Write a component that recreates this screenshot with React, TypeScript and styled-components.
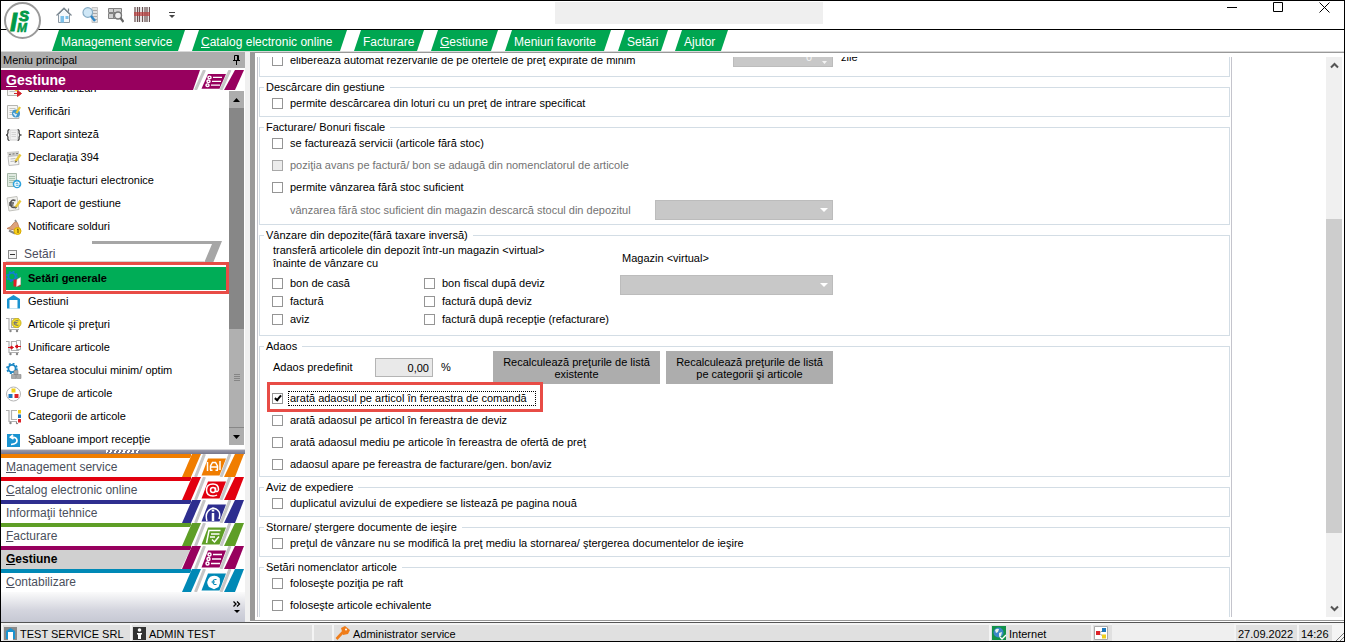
import React from 'react';
import styled, { createGlobalStyle, css } from 'styled-components';

const GlobalStyle = createGlobalStyle`
  *, *::before, *::after { box-sizing: border-box; }
  body { margin: 0; background: #fff; }
  body, button, input, select {
    font-family: "Liberation Sans", Arial, sans-serif;
    font-size: 11px;
    color: #000;
  }
  button { border: 0; padding: 0; background: none; }
  a { color: inherit; text-decoration: none; }
`;

const GREEN = '#00a651';
const PURPLE = '#97005e';
const RED = '#e84c46';

/* ---------- window frame ---------- */

const Window = styled.div`
  position: relative;
  display: flex;
  flex-direction: column;
  height: 100vh;
  border: 1px solid #000;
  background: #fff;
  line-height: 13px;
  overflow: hidden;
`;

const TitleBar = styled.header`
  display: grid;
  grid-template-columns: 554fr 268px 521fr;
  flex: none;
  height: 29px;
  border-bottom: 1px solid #000;
`;

const Logo = styled.svg`
  position: absolute;
  left: 2px;
  top: 0;
  width: 40px;
  height: 40px;
`;

const QuickBar = styled.div`
  display: flex;
  align-items: center;
  gap: 10px;
  padding-left: 55px;
  button, svg { display: block; }
`;

const TitleField = styled.div`
  height: 22px;
  margin-top: 1px;
  background: #efefef;
`;

const WindowButtons = styled.div`
  display: flex;
  justify-content: flex-end;
  gap: 10px;
  padding-right: 2px;
  button { width: 36px; height: 12px; }
  svg { display: block; margin: 0 auto; }
`;

const MenuBar = styled.nav`
  display: flex;
  flex: none;
  gap: 7px;
  height: 22px;
  padding-left: 51px;
  border-bottom: 1px solid #d9d9d9;
`;

const MenuTab = styled.a<{ $width: number }>`
  width: ${p => p.$width}px;
  padding-left: 9px;
  background: ${GREEN};
  color: #fff;
  font-size: 12px;
  line-height: 24px;
  white-space: nowrap;
  clip-path: polygon(7px 0, 100% 0, calc(100% - 7px) 100%, 0 100%);
`;

const Body = styled.div`
  display: flex;
  flex: 1;
  min-height: 0;
`;

/* ---------- sidebar ---------- */

const Sidebar = styled.aside`
  display: flex;
  flex-direction: column;
  flex: none;
  width: 249px;
  border-right: 5px solid #f0f0f0;
  background: #fff;
`;

const SidebarTitle = styled.div`
  display: flex;
  align-items: center;
  justify-content: space-between;
  flex: none;
  height: 16px;
  padding: 0 4px 0 2px;
  background: #adadad;
  svg { display: block; }
`;

const SectionTitle = styled.h2`
  display: flex;
  justify-content: space-between;
  flex: none;
  height: 20px;
  margin: 2px 0 0;
  padding-left: 5px;
  background: linear-gradient(90deg, ${PURPLE} 190px, #fff 190px);
  color: #fff;
  font-size: 14px;
  line-height: 20px;
  svg { display: block; }
`;

const ListArea = styled.div`
  display: flex;
  flex: 1;
  min-height: 0;
`;

const ListClip = styled.div`
  display: flex;
  flex: 1;
  flex-direction: column;
  justify-content: flex-end;
  overflow: hidden;
`;

const List = styled.div`
  flex: none;
  margin-bottom: -2px;
`;

const Item = styled.a<{ $active?: boolean }>`
  position: relative;
  display: flex;
  align-items: center;
  gap: 6px;
  height: 23px;
  margin-left: 5px;
  white-space: nowrap;
  svg { display: block; flex: none; }
  ${p => p.$active && css`
    background: #00ad57;
    font-weight: bold;
    &::after {
      content: "";
      position: absolute;
      inset: -5px 0 -4px -3px;
      border: 3px solid ${RED};
    }
  `}
`;

const GroupHeader = styled.div`
  position: relative;
  display: flex;
  align-items: center;
  gap: 7px;
  height: 29px;
  padding: 3px 0 0 7px;
  color: #4c4c5c;
  font-size: 12px;
`;

const Ribbon = styled.svg`
  position: absolute;
  right: 7px;
  top: 3px;
`;

const Collapse = styled.button`
  width: 9px;
  height: 9px;
  border: 1px solid #8c8c8c;
  background: linear-gradient(#333, #333) center / 5px 1px no-repeat #f4f4f4;
`;

const SideScroll = styled.div`
  display: flex;
  flex-direction: column;
  flex: none;
  width: 15px;
  margin: 1px 1px 4px 0;
  background: #878787;
  button {
    display: grid;
    place-items: center;
    flex: none;
    height: 17px;
    background: #adadad;
  }
`;

const SideThumb = styled.div`
  display: grid;
  place-items: center;
  flex: 98 1 0;
  margin-bottom: 1px;
  background: #b0b0b0;
`;

const Spacer = styled.div<{ $grow: number }>`
  flex: ${p => p.$grow} 1 0;
`;

const Splitter = styled.div`
  display: flex;
  justify-content: center;
  flex: none;
  height: 5px;
  border-top: 1px solid #d4d4d8;
  background: linear-gradient(#9a9aac, #77778c);
  &::after {
    content: "";
    width: 34px;
    height: 3px;
    background: repeating-linear-gradient(115deg, #fff 0 2px, #77778c 2px 4px);
  }
`;

const NavButton = styled.a<{ $color: string; $active?: boolean }>`
  display: flex;
  justify-content: space-between;
  flex: none;
  height: 23px;
  padding-left: 5px;
  background: linear-gradient(
    ${p => p.$color} 4px,
    ${p => (p.$active ? '#d0d0d0' : '#fff')} 4px
  ) 0 0 / 190px 100% no-repeat;
  color: ${p => (p.$active ? '#000' : '#4a4f5c')};
  font-size: 12px;
  font-weight: ${p => (p.$active ? 'bold' : 'normal')};
  line-height: 26px;
  svg { display: block; }
`;

const NavFooter = styled.div`
  display: flex;
  justify-content: flex-end;
  align-items: flex-end;
  flex: none;
  height: 30px;
  padding: 0 4px 8px 0;
  background: linear-gradient(#fbfbfb, #d4d5de 60%, #c6c8d3);
  svg { display: block; }
`;

/* ---------- settings form ---------- */

const Main = styled.main`
  display: flex;
  flex: 1;
  min-width: 0;
  margin-bottom: 1px;
  padding: 4px 2px 3px;
  border: solid #999;
  border-width: 1px 0 1px 5px;
`;

const FormClip = styled.div`
  display: flex;
  flex: 1;
  flex-direction: column;
  justify-content: flex-end;
  min-width: 0;
  margin-right: 94px;
  padding: 0 1px;
  border: solid #c4c4cc;
  border-width: 0 1px;
  overflow: hidden;
`;

const Group = styled.fieldset<{ $foot?: number; $open?: boolean }>`
  flex: none;
  min-width: 0;
  margin: 4px 0 0;
  padding: 0 4px ${p => p.$foot ?? 4}px;
  border: 1px solid #d3dde5;
  ${p => p.$open && css`border-bottom: 0;`}
`;

const Legend = styled.legend`
  padding: 0 5px 0 2px;
  line-height: 13px;
`;

const Rows = styled.div`
  display: flex;
  flex-direction: column;
  align-items: flex-start;
  gap: 4px;
  padding-left: 8px;
`;

const CheckLabel = styled.label<{ $muted?: boolean; $marked?: boolean }>`
  position: relative;
  display: flex;
  align-items: center;
  gap: 7px;
  height: 18px;
  color: ${p => (p.$muted ? '#737373' : '#000')};
  white-space: nowrap;
  ${p => p.$marked && css`
    gap: 5px;
    span { padding: 0 8px 0 1px; border: 1px dotted #000; }
    &::after {
      content: "";
      position: absolute;
      inset: -7px -7px -5px -5px;
      border: 3px solid ${RED};
    }
  `}
`;

const Box = styled.input`
  appearance: none;
  display: grid;
  place-items: center;
  flex: none;
  width: 11px;
  height: 11px;
  margin: 0;
  border: 1px solid #959595;
  background: #fff;
  &:disabled { border-color: #a8a8a8; background: #ececec; }
  &:checked::before {
    content: "";
    width: 4px;
    height: 7px;
    margin-top: -2px;
    border: solid #000;
    border-width: 0 2px 2px 0;
    transform: rotate(40deg);
  }
`;

const ReserveLine = styled.div`
  display: grid;
  grid-template-columns: 461px 100px auto;
  align-items: start;
  height: 22px;
  ${CheckLabel} { align-self: end; }
`;

const Unit = styled.span`
  padding-left: 8px;
  line-height: 20px;
`;

const SpinBox = styled.div`
  position: relative;
  input {
    display: block;
    width: 100%;
    height: 20px;
    padding: 0 20px 0 0;
    border: 1px solid #bcbcbc;
    background: #c8c8c8;
    color: #f4f4f4;
    text-align: right;
  }
  svg { position: absolute; right: 4px; top: 4px; }
`;

const StockLine = styled.div`
  display: grid;
  grid-template-columns: 365px 178px;
  align-items: center;
  padding-left: 18px;
  color: #737373;
`;

const SelectWrap = styled.div`
  position: relative;
  select {
    appearance: none;
    display: block;
    width: 100%;
    height: 20px;
    border: 1px solid #bcbcbc;
    border-radius: 0;
    background: #c8c8c8;
    opacity: 1;
  }
  &::after {
    content: "";
    position: absolute;
    right: 5px;
    top: 8px;
    border: 4px solid transparent;
    border-top-color: #fff;
    border-bottom: 0;
  }
`;

const TransferGrid = styled.div`
  display: grid;
  grid-template-columns: 348px 213px;
  padding: 2px 0 3px 8px;
`;

const Note = styled.p`
  margin: 0 0 4px;
  padding-left: 1px;
`;

const CheckColumns = styled.div`
  display: grid;
  grid-template-columns: 152px auto;
`;

const Store = styled.div`
  display: flex;
  flex-direction: column;
  gap: 10px;
  padding-top: 8px;
  label { padding-left: 2px; }
`;

const MarkupLine = styled.div`
  display: flex;
  align-items: center;
  margin: -2px 0 1px;
  label { width: 103px; padding-left: 1px; }
`;

const Percent = styled.input`
  width: 58px;
  height: 19px;
  padding: 0 3px;
  border: 1px solid #b4b4b4;
  background: #e9e9e9;
  text-align: right;
`;

const PercentSign = styled.span`
  width: 60px;
  padding-left: 8px;
`;

const ActionButton = styled.button`
  width: 167px;
  height: 33px;
  margin-right: 6px;
  background: #adadad;
  line-height: 12px;
  text-align: center;
`;

const PageScroll = styled.div`
  display: flex;
  flex-direction: column;
  flex: none;
  width: 16px;
  background: #f0f0f0;
  button {
    display: grid;
    place-items: center;
    flex: none;
    height: 17px;
  }
`;

const PageThumb = styled.div`
  flex: 314 1 0;
  background: #cdcdcd;
`;

/* ---------- status bar ---------- */

const StatusBar = styled.footer`
  display: flex;
  flex: none;
  gap: 2px;
  height: 19px;
  padding: 2px 0 0 2px;
  border-top: 1px solid #555;
  background: #f4f4f4;
`;

const Cell = styled.div<{ $width?: number }>`
  display: flex;
  align-items: center;
  gap: 3px;
  flex: ${p => (p.$width ? `0 0 ${p.$width}px` : '1 1 0')};
  padding: 2px 0 0 1px;
  background: #e0e0e0;
  white-space: nowrap;
  overflow: hidden;
  svg { flex: none; margin-top: -2px; }
`;

const DateCell = styled(Cell)`
  padding-left: 2px;
`;

const Blank = styled.div`
  flex: 0 0 122px;
  margin: -2px 0 0 -2px;
  background: #efefef;
`;

/* ---------- icons ---------- */

type IconName =
  | 'journal' | 'verify' | 'braces' | 'decl' | 'einvoice' | 'report' | 'bell'
  | 'settings' | 'depot' | 'cartEuro' | 'merge' | 'stock' | 'group' | 'category' | 'import';

const Sheet = () => (
  <>
    <path d="M1.500 1.500h10l1.500 13h-11.500z" fill="#f6f6f4" stroke="#b5b5b0" />
    <path d="M3.500 4.500h6M3.500 6.500h7M3.500 8.500h6M3.500 10.500h6" stroke="#c4c4c0" />
  </>
);

const Pencil = () => (
  <>
    <path d="M14.500 4.500l-5 7" stroke="#e9c93a" strokeWidth="2.400" />
    <path d="M9.800 10.500l-1.300 2.500 2.500-1.200z" fill="#555" />
  </>
);

const Cart = () => (
  <>
    <path d="M0 1.500h3v11h10M5.500 1.500h7v9h-7z" fill="none" stroke="#b0b0b0" strokeWidth="1.200" />
    <circle cx="4.500" cy="14" r="1.200" fill="#888" />
    <circle cx="11" cy="14" r="1.200" fill="#888" />
  </>
);

const Gear = ({ x, y, color }: { x: number; y: number; color: string }) => (
  <>
    <circle cx={x} cy={y} r="3.600" fill="none" stroke={color} strokeWidth="1.800" />
    <circle cx={x} cy={y} r="5" fill="none" stroke={color} strokeWidth="1.600" strokeDasharray="1.960 1.960" />
  </>
);

const art: Record<IconName, React.ReactNode> = {
  journal: (
    <>
      <Sheet />
      <path d="M8 12.500h6M11.500 9.500l4 3-4 3z" stroke="#d2232a" fill="#d2232a" />
      <path d="M8 7l3 3" stroke="#e9c93a" strokeWidth="2" />
    </>
  ),
  verify: (
    <>
      <Sheet />
      <circle cx="10" cy="9.500" r="4" fill="#3f97cc" />
      <path d="M7.500 9l2 2.500 1-1.500" stroke="#d9eef9" fill="none" strokeWidth="1.400" />
      <path d="M14 3l-3.500 6" stroke="#e9c93a" strokeWidth="2.200" />
    </>
  ),
  braces: (
    <>
      <path d="M3.500 2.500q-2 0-1.500 3 0 2-1.500 2.500 1.500.5 1.500 2.500-.5 3 1.500 3M11.500 2.500q2 0 1.500 3 0 2 1.500 2.500-1.500.5-1.500 2.500.5 3-1.500 3" fill="none" stroke="#333" strokeWidth="1.200" />
      <path d="M4 3h7.500v10H4z" fill="#f0f0f0" stroke="#d4d4d4" />
      <path d="M5.500 5.500h4.500M5.500 7.500h4.500M5.500 9.500h4.500" stroke="#d4d4d4" />
    </>
  ),
  decl: (
    <>
      <path d="M1 2l12-1v4.500l-11 1z" fill="#d0d0cc" />
      <path d="M2 6.500l10-1 1 9-10 1z" fill="#f6f6f4" stroke="#bbb" />
      <path d="M3 4.500l2-.2M6.500 4l2-.2M10 3.700l2-.2" stroke="#777" />
      <path d="M4.500 9l5-.5M4.500 11.500l5-.5" stroke="#bbb" />
      <Pencil />
    </>
  ),
  einvoice: (
    <>
      <path d="M1.500.5h9v13h-9z" fill="#dfe9e0" stroke="#a7b8a9" />
      <path d="M3 3.500h6M3 5.500h6M3 7.500h6M3 9.500h4" stroke="#a9c2ad" />
      <circle cx="11" cy="11" r="4.300" fill="#2ea3dc" />
      <path d="M8.800 11.200h4.400q0-2.200-2.200-2.200t-2.200 2.200 2.200 2.200q1.300 0 1.900-.8" stroke="#fff" fill="none" strokeWidth="1.100" />
    </>
  ),
  report: (
    <>
      <path d="M1 2l10-1.500 2 13-10 1.500z" fill="#f2f2ef" stroke="#c2c2bd" />
      <path d="M9.500 4.500q-5-1.500-5 3.200 0 4.800 5 3.300M3 7h5M3 9h4.500" stroke="#555" strokeWidth="1.600" fill="none" />
      <Pencil />
    </>
  ),
  bell: (
    <>
      <path d="M1 9.500q4-1 6-4.500 2.500-4 4.500-1l2.500 8z" fill="#dda27c" stroke="#c08460" />
      <path d="M3 11.500l6 3" stroke="#888" strokeWidth="2" />
      <path d="M9 1l1.500 2" stroke="#8b8b8b" strokeWidth="1.500" />
      <circle cx="11.500" cy="12" r="3.500" fill="#f7cf1e" stroke="#d8ab00" />
      <path d="M11 10.500l1-.5v4" stroke="#6b5500" fill="none" />
    </>
  ),
  settings: (
    <>
      <Gear x={6} y={5.500} color="#1180cf" />
      <path d="M7.500 8.500h7v7h-7z" fill="#e01f26" />
      <path d="M11 8.500l3.500-2v7l-4 2z" fill="#fff" stroke="#d9d9d9" strokeWidth=".5" />
    </>
  ),
  depot: (
    <>
      <path d="M1 5l6.500-4 6.500 4v9.500h-13z" fill="#1a93d0" />
      <path d="M3.500 6h8v8.500h-8z" fill="#fff" />
    </>
  ),
  cartEuro: (
    <>
      <Cart />
      <circle cx="10.500" cy="6" r="4.500" fill="#f5df2c" stroke="#c9b31c" />
      <path d="M12.500 3.800q-4-1-4 2.200t4 2.200M7.500 5.500h4M7.500 7h3.500" stroke="#777" fill="none" />
    </>
  ),
  merge: (
    <>
      <Cart />
      <path d="M10.500.5h4v9h-4z" fill="#fff" stroke="#b0b0b0" />
      <path d="M2 7.500h4M5 6l2.500 1.500L5 9zM15 6.500h-4M11.500 5L9 6.500 11.500 8z" fill="#d8121c" stroke="#d8121c" />
    </>
  ),
  stock: (
    <>
      <Gear x={6} y={5.500} color="#1a86c4" />
      <path d="M8 7.500h4v4h-4zM5.500 11.500h4.500v4h-4.500zM10.500 11.500h4.500v4h-4.500z" fill="#aaa" stroke="#888" strokeWidth=".6" />
    </>
  ),
  group: (
    <>
      <circle cx="7.500" cy="8" r="7" fill="#fff" stroke="#b4b4b4" />
      <path d="M5.500 2.500h4v4h-4z" fill="#efcf1c" />
      <path d="M2.500 8h4v4h-4z" fill="#1e78bd" />
      <path d="M8.500 8h4v4h-4z" fill="#dd2228" />
    </>
  ),
  category: (
    <>
      <Cart />
      <path d="M11 0h5v14h-5z" fill="#fff" />
      <path d="M12 1h3v3.500h-3z" fill="#efcf1c" />
      <path d="M12 5.500h3v3.500h-3z" fill="#1e78bd" />
      <path d="M12 10h3v3.500h-3z" fill="#dd2228" />
    </>
  ),
  import: (
    <>
      <path d="M1 2h13v13h-13z" fill="#1a93d0" />
      <path d="M5 5q6 0 6 3.500T5 12.500M7 3L4.500 5.200 7.500 7" fill="none" stroke="#fff" strokeWidth="1.700" />
    </>
  ),
};

const Icon = ({ name }: { name: IconName }) => (
  <svg width="16" height="16" viewBox="0 0 16 16" aria-hidden="true">{art[name]}</svg>
);

type BadgeName = 'car' | 'at' | 'info' | 'check' | 'list' | 'globe';

const badgeArt: Record<BadgeName, React.ReactNode> = {
  car: <path d="M26.500 8v9M39 7v9M29.500 16v-4l2-3.500h3l2 3.500v4M29.500 13h7M29 16.200h2.500M34.500 16.200h2.500" />,
  at: (
    <>
      <circle cx="32" cy="13" r="2.500" />
      <path d="M34.500 10.500v3.500q2.500 1.500 3-1.500 0-5.500-5.500-5.500-6.500 0-6.500 6t6.500 6q2.500 0 4-1" />
    </>
  ),
  info: (
    <>
      <path d="M26 21q-3-10 6-13 9 2 6 11" />
      <path d="M32 13v8M32 9.500v2" strokeWidth="2.500" />
    </>
  ),
  check: <path d="M25.500 20L28 7.500h11.500M30 11h8.500M29 14h5M31 16.500l2.500 2.500 4.500-5.500" />,
  list: (
    <>
      <path d="M32 8.500h9M31 13h9M30 17.500h9" />
      <circle cx="28.500" cy="8.500" r="1.500" />
      <circle cx="27.500" cy="13" r="1.500" />
      <circle cx="26.500" cy="17.500" r="1.500" />
    </>
  ),
  globe: (
    <>
      <path d="M28.500 17.500q-3.500-4.500 1-9 5-2.500 8.500 1 1 4.500-1 8l-4 2z" fill="#fff" />
      <path d="M35.500 10.500q-3.500-.5-3.500 2.500t3.500 2.500M30.500 13h3.500" strokeWidth="1.100" stroke="#0088b5" />
    </>
  ),
};

/* Slanted stripes with the section symbol at the right end of a bar. */
const Badge = ({ color, name, height = 23 }: { color: string; name: BadgeName; height?: number }) => (
  <svg width="64" height={height} viewBox="0 0 64 23" preserveAspectRatio="none" aria-hidden="true">
    <path d="M11 0H64V23H0z" fill="#fff" />
    <path d={height === 23 ? 'M11 0h9L10 23H1z' : 'M0 0h19L12 23H0z'} fill={color} />
    <path d="M23.500 0L14.500 23M49 0L40 23" stroke="#c6c6c6" strokeWidth="3" />
    <path d="M27 4.500h18L38.500 21.500H20.500z" fill={color} />
    <g stroke="#fff" strokeWidth="1.500" fill="none">{badgeArt[name]}</g>
    <path d="M54 0h9l-9 23H43z" fill={color} />
  </svg>
);

const Triangle = ({ up }: { up?: boolean }) => (
  <svg width="7" height="4" viewBox="0 0 7 4" aria-hidden="true">
    <path d={up ? 'M0 4h7L3.500 0z' : 'M0 0h7L3.500 4z'} />
  </svg>
);

const Chevron = ({ up }: { up?: boolean }) => (
  <svg width="9" height="7" viewBox="0 0 9 7" aria-hidden="true">
    <path d={up ? 'M1 5.500L4.500 2 8 5.500' : 'M1 1.500L4.500 5 8 1.500'} fill="none" stroke="#555" strokeWidth="2" />
  </svg>
);

/* ---------- data ---------- */

const tabs: [string, number, boolean][] = [
  ['Management service', 133, false],
  ['Catalog electronic online', 155, true],
  ['Facturare', 70, false],
  ['Gestiune', 67, true],
  ['Meniuri favorite', 106, false],
  ['Setări', 50, false],
  ['Ajutor', 53, false],
];

const reports: [IconName, string][] = [
  ['journal', 'Jurnal vânzări'],
  ['verify', 'Verificări'],
  ['braces', 'Raport sinteză'],
  ['decl', 'Declaraţia 394'],
  ['einvoice', 'Situaţie facturi electronice'],
  ['report', 'Raport de gestiune'],
  ['bell', 'Notificare solduri'],
];

const settings: [IconName, string][] = [
  ['settings', 'Setări generale'],
  ['depot', 'Gestiuni'],
  ['cartEuro', 'Articole şi preţuri'],
  ['merge', 'Unificare articole'],
  ['stock', 'Setarea stocului minim/ optim'],
  ['group', 'Grupe de articole'],
  ['category', 'Categorii de articole'],
  ['import', 'Şabloane import recepţie'],
];

const sections: { label: string; color: string; badge: BadgeName; plain?: boolean; active?: boolean }[] = [
  { label: 'Management service', color: '#f07d00', badge: 'car' },
  { label: 'Catalog electronic online', color: '#e2000f', badge: 'at' },
  { label: 'Informaţii tehnice', color: '#2e2e8f', badge: 'info', plain: true },
  { label: 'Facturare', color: '#5e9e26', badge: 'check' },
  { label: 'Gestiune', color: PURPLE, badge: 'list', active: true },
  { label: 'Contabilizare', color: '#0089b6', badge: 'globe' },
];

const Access = ({ text }: { text: string }) => <span><u>{text[0]}</u>{text.slice(1)}</span>;

const Check = ({ text, disabled, marked }: { text: string; disabled?: boolean; marked?: boolean }) => (
  <CheckLabel $muted={disabled} $marked={marked}>
    <Box type="checkbox" disabled={disabled} defaultChecked={marked} />
    <span>{text}</span>
  </CheckLabel>
);

const QuickIcons = () => (
  <QuickBar>
    <button aria-label="Acasă">
      <svg width="16" height="16" viewBox="0 0 16 16">
        <path d="M2.500 7.500v8h11v-8L8 2z" fill="#f4f8fb" stroke="#8d9aa5" />
        <path d="M.5 8.500L8 1l7.500 7.500M12.500 1.500v3" fill="none" stroke="#7b8790" strokeWidth="1.200" />
        <path d="M4.500 9h3.500v6.500H4.500zM9.500 9h3v3h-3z" fill="#7cc0ea" />
      </svg>
    </button>
    <button aria-label="Căutare">
      <svg width="16" height="16" viewBox="0 0 16 16">
        <path d="M10 .5h5.500v15H10z" fill="#e2e2e2" stroke="#c4c4c4" />
        <path d="M11 3.500h4M11 6.500h4M11 9.500h4M11 12.500h4" stroke="#aaa" />
        <circle cx="5.800" cy="5.500" r="4.800" fill="#cfe7f6" stroke="#86abc4" strokeWidth="1.200" />
        <path d="M9 9l4 5" stroke="#2f86c6" strokeWidth="2.400" />
      </svg>
    </button>
    <button aria-label="Căutare articole">
      <svg width="16" height="16" viewBox="0 0 16 16">
        <path d="M.5 1.500h5v4h-5zM5.500 1.500h8v4h-8zM.5 6.500h5v5h-5zM5.500 6.500h8v5h-8z" fill="#cfcfcf" stroke="#808080" />
        <circle cx="10" cy="8.500" r="3.500" fill="#eee" stroke="#777" strokeWidth="1.400" />
        <path d="M12.500 11l3 4" stroke="#666" strokeWidth="2.200" />
      </svg>
    </button>
    <button aria-label="Cod de bare">
      <svg width="16" height="16" viewBox="0 0 16 16">
        <path d="M1 0v15M3.500 0v15M5.500 0v15M8.500 0v15M11 0v15M13 0v15M15.500 0v15" stroke="#6b5555" strokeWidth="1.300" />
        <path d="M0 5h16v4H0z" fill="#b93a3a" opacity=".7" />
      </svg>
    </button>
    <button aria-label="Personalizare">
      <svg width="24" height="8" viewBox="0 0 24 8">
        <path d="M9 1.500h6" stroke="#444" />
        <path d="M9 4h6l-3 3z" fill="#444" />
      </svg>
    </button>
  </QuickBar>
);

export default function App() {
  return (
    <>
      <GlobalStyle />
      <Window>
        <TitleBar>
          <QuickIcons />
          <TitleField />
          <WindowButtons>
            <button aria-label="Minimizare">
              <svg width="10" height="11" viewBox="0 0 10 11"><path d="M0 5.500h10" stroke="#000" /></svg>
            </button>
            <button aria-label="Maximizare">
              <svg width="10" height="11" viewBox="0 0 10 11"><path d="M.5 .5h9v9h-9z" fill="none" stroke="#000" /></svg>
            </button>
            <button aria-label="Închidere">
              <svg width="11" height="11" viewBox="0 0 11 11"><path d="M.5 .5l10 10M10.500 .5l-10 10" stroke="#000" /></svg>
            </button>
          </WindowButtons>
        </TitleBar>
        <MenuBar>
          {tabs.map(([label, width, key]) => (
            <MenuTab key={label} href="#" $width={width}>
              {key ? <Access text={label} /> : label}
            </MenuTab>
          ))}
        </MenuBar>
        <Logo viewBox="0 0 40 40" role="img" aria-label="ISM">
          <circle cx="19.500" cy="19.500" r="17.500" fill="#fff" stroke="#9a9a9a" strokeWidth="2" />
          <g fill="#009a48" fontFamily="Liberation Sans, Arial, sans-serif" fontWeight="bold" fontStyle="italic">
            <text x="7" y="30" fontSize="25" stroke="#009a48">I</text>
            <text x="16" y="20" fontSize="15" stroke="#009a48">S</text>
            <text x="14" y="31" fontSize="12" stroke="#009a48" strokeWidth=".5">M</text>
          </g>
        </Logo>

        <Body>
          <Sidebar>
            <SidebarTitle>
              Meniu principal
              <svg width="9" height="10" viewBox="0 0 9 10" aria-hidden="true">
                <path d="M2.500 5.500v-5h4v5M1 5.500h7M4.500 6v4M5.500 1v4" stroke="#000" fill="none" />
              </svg>
            </SidebarTitle>
            <SectionTitle>
              <Access text="Gestiune" />
              <Badge color={PURPLE} name="list" height={20} />
            </SectionTitle>

            <ListArea>
              <ListClip>
                <List>
                  {reports.map(([icon, label]) => (
                    <Item key={label} href="#"><Icon name={icon} />{label}</Item>
                  ))}
                  <GroupHeader>
                    <Ribbon width="216" height="22" viewBox="0 0 216 22" aria-hidden="true">
                      <path d="M86 0h130l-9 22h-9l8-19H86z" fill="#a6a6a6" />
                      <path d="M0 20.500h198" stroke="#d6d6d6" />
                    </Ribbon>
                    <Collapse aria-label="Restrânge Setări" />
                    Setări
                  </GroupHeader>
                  {settings.map(([icon, label], i) => (
                    <Item key={label} href="#" $active={i === 0}><Icon name={icon} />{label}</Item>
                  ))}
                </List>
              </ListClip>
              <SideScroll>
                <button aria-label="Sus"><Triangle up /></button>
                <Spacer $grow={221} />
                <SideThumb>
                  <svg width="6" height="8" viewBox="0 0 6 8" aria-hidden="true">
                    <path d="M0 .5h6M0 2.500h6M0 4.500h6M0 6.500h6" stroke="#858585" />
                  </svg>
                </SideThumb>
                <button aria-label="Jos"><Triangle /></button>
              </SideScroll>
            </ListArea>

            <Splitter />
            {sections.map(s => (
              <NavButton key={s.label} href="#" $color={s.color} $active={s.active}>
                {s.plain ? s.label : <Access text={s.label} />}
                <Badge color={s.color} name={s.badge} />
              </NavButton>
            ))}
            <NavFooter>
              <svg width="8" height="13" viewBox="0 0 8 13" aria-hidden="true">
                <path d="M.5 .5L3 3 .5 5.500M4 .5L6.500 3 4 5.500" fill="none" stroke="#000" strokeWidth="1.300" />
                <path d="M1 9h6l-3 3z" />
              </svg>
            </NavFooter>
          </Sidebar>

          <Main>
            <FormClip>
              <Group $foot={7}>
                <Rows>
                  <ReserveLine>
                    <Check text="eliberează automat rezervările de pe ofertele de preţ expirate de minim" />
                    <SpinBox>
                      <input type="text" aria-label="Număr zile" defaultValue="0" disabled />
                      <svg width="9" height="13" viewBox="0 0 9 13" aria-hidden="true">
                        <path d="M2 3h5L4.500 0zM2 10h5l-2.500 3z" fill="#f4f4f4" />
                      </svg>
                    </SpinBox>
                    <Unit>zile</Unit>
                  </ReserveLine>
                </Rows>
              </Group>

              <Group>
                <Legend>Descărcare din gestiune</Legend>
                <Rows><Check text="permite descărcarea din loturi cu un preţ de intrare specificat" /></Rows>
              </Group>

              <Group>
                <Legend>Facturare/ Bonuri fiscale</Legend>
                <Rows>
                  <Check text="se facturează servicii (articole fără stoc)" />
                  <Check text="poziţia avans pe factură/ bon se adaugă din nomenclatorul de articole" disabled />
                  <Check text="permite vânzarea fără stoc suficient" />
                  <StockLine>
                    <label htmlFor="depozit">
                      vânzarea fără stoc suficient din magazin descarcă stocul din depozitul
                    </label>
                    <SelectWrap><select id="depozit" disabled /></SelectWrap>
                  </StockLine>
                </Rows>
              </Group>

              <Group>
                <Legend>Vânzare din depozite(fără taxare inversă)</Legend>
                <TransferGrid>
                  <div>
                    <Note>
                      transferă articolele din depozit într-un magazin &lt;virtual&gt;
                      <br />
                      înainte de vânzare cu
                    </Note>
                    <CheckColumns>
                      <Check text="bon de casă" />
                      <Check text="bon fiscal după deviz" />
                      <Check text="factură" />
                      <Check text="factură după deviz" />
                      <Check text="aviz" />
                      <Check text="factură după recepţie (refacturare)" />
                    </CheckColumns>
                  </div>
                  <Store>
                    <label htmlFor="magazin">Magazin &lt;virtual&gt;</label>
                    <SelectWrap><select id="magazin" disabled /></SelectWrap>
                  </Store>
                </TransferGrid>
              </Group>

              <Group $foot={3}>
                <Legend>Adaos</Legend>
                <Rows>
                  <MarkupLine>
                    <label htmlFor="adaos">Adaos predefinit</label>
                    <Percent id="adaos" type="text" defaultValue="0,00" />
                    <PercentSign>%</PercentSign>
                    <ActionButton>Recalculează preţurile de listă<br />existente</ActionButton>
                    <ActionButton>Recalculează preţurile de listă<br />pe categorii şi articole</ActionButton>
                  </MarkupLine>
                  <Check text="arată adaosul pe articol în fereastra de comandă" marked />
                  <Check text="arată adaosul pe articol în fereastra de deviz" />
                  <Check text="arată adaosul mediu pe articole în fereastra de ofertă de preţ" />
                  <Check text="adaosul apare pe fereastra de facturare/gen. bon/aviz" />
                </Rows>
              </Group>

              <Group>
                <Legend>Aviz de expediere</Legend>
                <Rows><Check text="duplicatul avizului de expediere se listează pe pagina nouă" /></Rows>
              </Group>

              <Group>
                <Legend>Stornare/ ştergere documente de ieşire</Legend>
                <Rows><Check text="preţul de vânzare nu se modifică la preţ mediu la stornarea/ ştergerea documentelor de ieşire" /></Rows>
              </Group>

              <Group $foot={3} $open>
                <Legend>Setări nomenclator articole</Legend>
                <Rows>
                  <Check text="foloseşte poziţia pe raft" />
                  <Check text="foloseşte articole echivalente" />
                </Rows>
              </Group>
            </FormClip>

            <PageScroll>
              <button aria-label="Derulare sus"><Chevron up /></button>
              <Spacer $grow={145} />
              <PageThumb />
              <Spacer $grow={67} />
              <button aria-label="Derulare jos"><Chevron /></button>
            </PageScroll>
          </Main>
        </Body>

        <StatusBar>
          <Cell $width={127}>
            <svg width="13" height="13" viewBox="0 0 13 13" aria-hidden="true">
              <path d="M0 0h13v13H0z" fill="#8a8a8a" />
              <path d="M2 12V4l4.500-3L11 4v8z" fill="#1a93d0" />
              <path d="M4 5h5v8H4z" fill="#fff" />
            </svg>
            TEST SERVICE SRL
          </Cell>
          <Cell $width={180}>
            <svg width="13" height="13" viewBox="0 0 13 13" aria-hidden="true">
              <path d="M0 0h13v13H0z" fill="#333" />
              <circle cx="6.500" cy="3" r="1.800" fill="#fff" />
              <path d="M4 6h5v1.500H8V12H5V7.500H4z" fill="#fff" />
            </svg>
            ADMIN TEST
          </Cell>
          <Cell $width={18} />
          <Cell>
            <svg width="15" height="14" viewBox="0 0 15 14" aria-hidden="true">
              <path d="M8 6L1.500 13" stroke="#ef7d1a" strokeWidth="2.600" />
              <path d="M6 2l4-2 5 4-2 4-5 1z" fill="#ef7d1a" />
              <circle cx="11" cy="3.500" r="1" fill="#fff" />
            </svg>
            Administrator service
          </Cell>
          <Cell $width={100}>
            <svg width="14" height="14" viewBox="0 0 14 14" aria-hidden="true">
              <path d="M0 0h14v14H0z" fill="#12924a" />
              <circle cx="6.500" cy="6.500" r="5" fill="#3a86c8" />
              <path d="M3 4q2-2 4-1l-1 3-2 1zM7 7l3-1-1 4-2 1z" fill="#e8f4e8" />
              <path d="M8 11l2 2 4-4" stroke="#fff" fill="none" strokeWidth="1.300" />
            </svg>
            Internet
          </Cell>
          <Cell $width={19}>
            <svg width="14" height="14" viewBox="0 0 14 14" aria-hidden="true">
              <path d="M.5 .5h13v13H.5z" fill="#fff" stroke="#aaa" />
              <path d="M5 7l5-3M5 7l5 4" stroke="#999" />
              <path d="M2 5h4v4H2z" fill="#dd2228" />
              <path d="M8 2h4v4H8z" fill="#1e78bd" />
              <path d="M8 8.500h4v4H8z" fill="#efcf1c" />
            </svg>
          </Cell>
          <Blank />
          <DateCell $width={61}>27.09.2022</DateCell>
          <DateCell $width={33}>14:26</DateCell>
          <svg width="10" height="16" viewBox="0 0 10 16" aria-hidden="true">
            <path d="M2 16l8-8M6 16l4-4" stroke="#777" />
          </svg>
        </StatusBar>
      </Window>
    </>
  );
}
